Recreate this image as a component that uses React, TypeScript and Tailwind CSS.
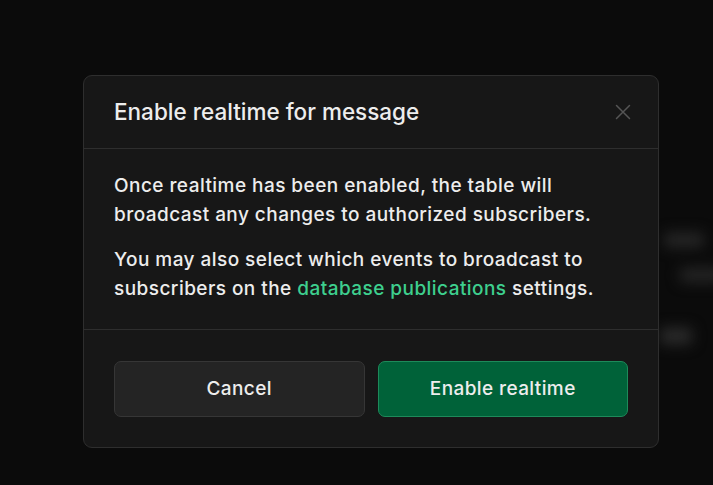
import React from 'react';

const CloseIcon: React.FC = () => (
  <svg width="18" height="18" viewBox="0 0 18 18" fill="none" stroke="currentColor" strokeWidth="1.5" strokeLinecap="round">
    <path d="M2.5 2.5l13 13M15.5 2.5l-13 13" />
  </svg>
);

const App: React.FC = () => {
  return (
    <div
      className="relative h-[485px] w-[713px] overflow-hidden bg-[#0b0b0b]"
      style={{ fontFamily: 'Inter, "Noto Sans", sans-serif' }}
    >
      {/* blurred page behind the overlay */}
      <div className="absolute inset-0 blur-[7px]">
        <div className="absolute left-[664px] top-[233px] h-[14px] w-[40px] rounded bg-[#282828]" />
        <div className="absolute left-[680px] top-[268px] h-[14px] w-[44px] rounded bg-[#262626]" />
        <div className="absolute left-[660px] top-[328px] h-[16px] w-[32px] rounded bg-[#2c2c2c]" />
      </div>

      <div className="relative pl-[83px] pt-[75px]">
        <div className="w-[576px] rounded-[9px] border border-[#2e2e2e] bg-[#171717]">
          <div className="flex h-[73px] items-center justify-between border-b border-[#2e2e2e] pl-[30px] pr-[26px]">
            <h2 className="text-[22.5px] font-medium text-[#ededed]">Enable realtime for message</h2>
            <button className="text-[#555555]">
              <CloseIcon />
            </button>
          </div>

          <div className="flex h-[181px] flex-col gap-[16px] border-b border-[#2e2e2e] px-[30px] pt-[22px] text-[19px] font-medium leading-[29px] tracking-[0.45px] text-[#ededed]">
            <p>
              Once realtime has been enabled, the table will
              <br />
              broadcast any changes to authorized subscribers.
            </p>
            <p>
              You may also select which events to broadcast to
              <br />
              subscribers on the <span className="text-[#3ecf8e]">database publications</span> settings.
            </p>
          </div>

          <div className="flex gap-[13px] px-[30px] pt-[31px] pb-[30px]">
            <button className="h-[56px] flex-1 rounded-[7px] border border-[#363636] bg-[#242424] text-[19px] font-medium tracking-[0.4px] text-[#ededed]">
              Cancel
            </button>
            <button className="h-[56px] flex-1 rounded-[7px] border border-[#1d8a5a] bg-[#006239] text-[19px] font-medium tracking-[0.4px] text-[#ededed]">
              Enable realtime
            </button>
          </div>
        </div>
      </div>
    </div>
  );
};

export default App;
